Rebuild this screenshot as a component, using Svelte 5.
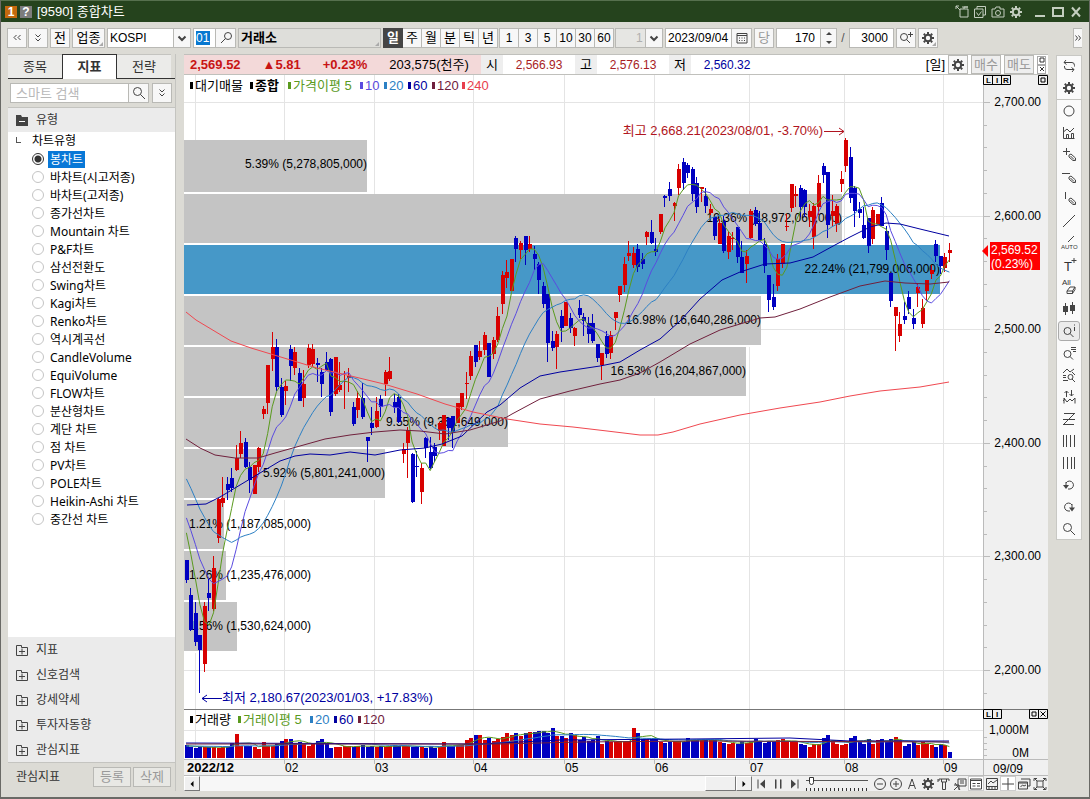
<script lang="ts">
  type Candle = { x: number; up: boolean; high: number; top: number; bottom: number; low: number };
  type Icon = { d?: string; fill?: string; text?: string; tx?: number; ty?: number; size?: number };

  const gear =
    'M8 2v2M8 12v2M2 8h2M12 8h2M3.8 3.8l1.4 1.4M10.8 10.8l1.4 1.4M3.8 12.2l1.4-1.4M10.8 5.2l1.4-1.4';

  const icons: Record<string, Icon> = {
    search: { d: 'M10.5 6.5a4 4 0 1 1-8 0a4 4 0 0 1 8 0M9.5 9.5L14 14' },
    searchLeft: { d: 'M13.5 6a3.5 3.5 0 1 1-7 0a3.5 3.5 0 0 1 7 0M7.5 8.5L3 13' },
    down: { d: 'M4.5 6.5L8 10l3.5-3.5' },
    doubleDown: { d: 'M5.5 4.5L8 7l2.5-2.5M5.5 8.5L8 11l2.5-2.5' },
    doubleLeft: { d: 'M7.5 5L5 7.5L7.5 10M11.5 5L9 7.5l2.5 2.5' },
    doubleRight: { d: 'M5.5 5.5L7.5 8L5.5 10.5M8.5 5.5L10.5 8L8.5 10.5' },
    calendar: { d: 'M3 3.5h10v9.5H3zM3 5.5h10M5 8h1M7.5 8h1M10 8h1M5 10.5h1M7.5 10.5h1M10 10.5h1' },
    zoomPlus: { d: 'M9.5 7a3.5 3.5 0 1 1-7 0a3.5 3.5 0 0 1 7 0M8.5 9.5L12 13M12.5 2v5M10 4.5h5' },
    refresh: { d: 'M5 2L3 4.5L5.5 6.5M3 4.5h8q2.5 0 2.5 3v1M11 14l2-2.5L10.5 9.5M13 11.5H6Q3.5 11.5 3.5 9V8' },
    circle: { d: 'M13 8a5 5 0 1 1-10 0a5 5 0 0 1 10 0' },
    chart: { d: 'M2.5 2v11.5h11M5.5 13V9.5h2V13M10.5 13V8.5h2V13M3 6.5l3-2.5l3 3l4-4' },
    plusPen: { d: 'M2 4.5h7M5.5 1v7M8 8l2-1l4.5 4v2.5H12L8 10zM9.5 9l3.5 3.5' },
    minusPen: { d: 'M1 4.5h8M8 8l2-1l4.5 4v2.5H12L8 10zM9.5 9l3.5 3.5' },
    linePen: { d: 'M4.5 1v7M8 8l2-1l4.5 4v2.5H12L8 10zM9.5 9l3.5 3.5' },
    line: { d: 'M2 14L14 2' },
    auto: { d: 'M7 7l6-6', text: 'AUTO', tx: 0, ty: 14, size: 6 },
    text: { d: 'M10.5 3.5h5M13 1v5', text: 'T', tx: 3, ty: 14, size: 13 },
    all: { d: 'M6 12l3-4h5l-2.5 4zM6 12v2.5h5.5v-2.5M14 8v2.500l-2.500 4', text: 'All', tx: 1, ty: 6, size: 8 },
    candles: { d: 'M4.5 2v12M11.5 1v12', fill: 'M2 5h5v6H2zM9 4h5v6H9z' },
    zoomInfo: { d: 'M10 8a3.5 3.5 0 1 1-7 0a3.5 3.5 0 0 1 7 0M9 10.5L12.5 14M13.5 4v4M13.5 1.5v1' },
    zoomList: { d: 'M10 9a3.5 3.5 0 1 1-7 0a3.5 3.5 0 0 1 7 0M9 11.5l3 3M10 2.5h5M10 4.5h5M12 6.5h3' },
    zoomWave: { d: 'M2 6l4-4l3 3l4-3M2 8.5h3M2 10.5h3M2 13.5h5M12 10a2.5 2.5 0 1 1-5 0a2.5 2.5 0 0 1 5 0M11 12l3 3M11 5l3 3' },
    arrows: { d: 'M5.5 8V2L3.5 4M5.5 2l2 2M10.5 1v6L8.5 5M10.5 7l2-2M3 14.500V9l3 4l3-3l2 2l3-3v5.500M2 12l2-2' },
    zigzag: { d: 'M3 2.5h11M2 13.5h11M2 8.5h12M13 3L3 13' },
    bars3: { d: 'M2.5 2v12M5.5 2v12M9.5 2v12M13.5 2v12' },
    bars4: { d: 'M2.5 2v12M6.5 2v12M10.5 2v12M13.5 2v12' },
    undo: { d: 'M5 6a4 4 0 1 1 4 6H7M5 5v5', fill: 'M2 8h6L5 12z' },
    redo: { d: 'M11 6a4 4 0 1 0-4 6h2M11 5v5', fill: 'M8 8.5h6L11 12.5z' },
    minus: { d: 'M13.5 8a5.5 5.5 0 1 1-11 0a5.5 5.5 0 0 1 11 0M5 8h6' },
    plus: { d: 'M13.5 8a5.5 5.5 0 1 1-11 0a5.5 5.5 0 0 1 11 0M5 8h6M8 5v6' },
    letter: { d: 'M4.5 13L8 3l3.5 10M6 9.5h4' },
    brush: { d: 'M3 5V3h10v2M5.5 3v3h5V3M6.500 6v7.500h3V6M2 3v3' },
    link: { d: 'M6 3h8v7H6zM8 5h4M8 7h4M2 9h5v5M2 14l5-5M3 7l5 7' },
    table: { d: 'M2.5 3h11v10h-11zM3 4.5h10M4.5 7.5h3M9 7.5h3M4.5 10h3M9 10h3' },
    graph: { d: 'M2.5 2.5h11v11h-11zM3 10.5h10M5 13v-2M8 13v-2M11 13v-2M4 8l3-3l2 2l4-3' },
    cross: { d: 'M8 2v12M2 8h12' },
    windows: { d: 'M5 3h9v7h-2M2.5 6h9v7h-9zM3 7h8M4.5 11l2-2l1.500 1l2-1' },
    fit: { d: 'M5 5h6v6H5zM2 5V2.5h3M11 2.5h3V5M14 11v2.5h-3M5 13.5H2V11M2 2l3 3M14 2l-3 3M14 14l-3-3M2 14l3-3' },
    skipBack: { d: 'M4 3.5v9', fill: 'M11 3.5v9L6 8z' },
    pause: { d: 'M5.5 3.5v9M6 3.5v9M10.5 3.5v9M11 3.5v9' },
    skipNext: { d: 'M12 3.5v9', fill: 'M5 3.5v9L10 8z' },
    popOut: { d: 'M6 5h8v8H6zM10 5V3h4M2 2l4 4M2 5V2h3M8 3h6' },
    checkWin: { d: 'M2.5 5h8.5v8.5H2.5zM5 5V2.5h8.5V11H11M4.5 8.5l2 3l3-4' },
    camera: { d: 'M2 5h3l1-2h4v2h4v8H2zM10.5 9a2.5 2.5 0 1 1-5 0a2.5 2.5 0 0 1 5 0' },
    folderMinus: { fill: 'M2 3h5l1 2h6v9H2z' },
    folderPlus: { d: 'M2.5 3.5h5v2h6v8h-11zM5 9.5h6M8 6.5v6' }
  };

  const treeItems = [
    '봉차트', '바차트(시고저종)', '바차트(고저종)', '종가선차트', 'Mountain 차트', 'P&F차트', '삼선전환도',
    'Swing차트', 'Kagi차트', 'Renko차트', '역시계곡선', 'CandleVolume', 'EquiVolume', 'FLOW차트',
    '분산형차트', '계단 차트', '점 차트', 'PV차트', 'POLE차트', 'Heikin-Ashi 차트', '중간선 차트'
  ];
  const folders = ['지표', '신호검색', '강세약세', '투자자동향', '관심지표'];
  const periods = ['일', '주', '월', '분', '틱', '년'];
  const minutes = ['1', '3', '5', '10', '30', '60'];
  const drawTools = [
    'circle', 'chart', 'plusPen', 'minusPen', 'linePen', 'line', 'auto', 'text', 'all', 'candles', 'zoomInfo',
    'zoomList', 'zoomWave', 'arrows', 'zigzag', 'bars3', 'bars4', 'undo', 'redo', 'search'
  ];
  const footTools = ['minus', 'plus', 'letter', 'gear', 'brush', 'link', 'table', 'graph', 'cross', 'windows', 'fit'];

  let chartType = $state('봉차트');
  let period = $state('일');
  let keyword = $state('');
  let drawTool = $state('zoomInfo');

  // r = up day, b = down day; then high, body top, body bottom, low
  const rawCandles = `
    b560,560,580,583 b588,595,630,631 b602,613,642,646 b635,635,650,693 r602,606,664,672 b578,593,598,611
    r556,568,609,611 r498,499,538,543 r477,498,503,507 b477,484,490,500 b468,478,488,492 r445,458,470,471
    r431,443,454,458 b438,442,467,468 b462,467,480,493 r465,465,494,494 r447,448,467,472 r406,409,414,419
    r365,365,403,414 r332,347,359,371 b339,347,387,391 b378,387,415,417 r381,386,391,405 b345,349,366,381
    r347,352,368,375 b368,373,401,401 r370,384,398,407 r344,348,365,368 r344,349,364,367 b358,363,365,382
    b368,372,384,397 b352,362,370,371 b358,359,412,416 r357,357,394,396 r362,385,390,392 r371,381,382,409
    r368,376,378,392 b402,407,424,426 r391,398,410,418 b383,398,417,419 b437,437,441,462 b407,423,428,435
    r397,411,427,428 b395,399,407,417 r370,372,384,396 r357,371,379,381 b394,402,407,413 b394,397,422,423
    r443,449,454,463 r427,430,443,478 b453,454,502,503 b451,466,467,477 r463,468,492,504 b437,438,448,458
    b437,452,468,469 b443,447,456,462 r422,423,431,440 r415,415,446,446 b417,418,428,440 b416,416,432,448
    r403,403,423,423 r393,393,407,410 r372,383,384,399 r351,356,376,380 b345,345,362,367 r341,351,357,360
    r332,335,350,355 b343,343,377,377 r337,340,354,359 r307,316,340,342 r271,275,304,314 r260,272,278,288
    r259,259,291,291 b236,238,249,262 r241,243,250,259 b236,236,250,265 r236,244,249,252 b246,254,259,270
    b262,264,280,294 b282,286,304,308 b294,294,343,362 b331,341,348,351 r331,334,347,369 b310,316,328,342
    r302,302,326,326 b313,318,328,333 r327,328,336,346 b300,308,315,318 b313,317,321,336 b317,323,334,343
    b314,323,341,343 b344,344,358,362 r353,353,365,380 b331,336,354,358 r331,335,353,359 r312,312,318,330
    r286,286,295,302 r257,264,285,292 r241,253,256,261 r247,253,265,268 b244,249,267,272 b253,259,264,269
    r231,232,237,245 b220,232,243,244 b238,249,252,256 r214,214,232,234 b195,196,198,207 b182,189,196,201
    r202,203,206,221 r164,169,188,195 b158,162,183,190 b163,165,173,178 b167,169,194,201 b177,183,207,213
    r187,187,189,202 b188,196,206,213 r204,209,213,215 b217,217,236,240 r219,223,244,244 b216,221,251,253
    r232,236,252,259 r232,238,239,250 b227,227,257,263 b241,257,273,273 r250,256,264,283 r209,211,238,239
    b207,210,224,226 b211,223,240,240 b238,244,266,273 b275,275,300,312 b284,297,307,310 r254,259,286,291
    r244,244,264,268 r214,226,227,231 r184,184,208,212 r186,194,196,207 b185,188,207,217 b189,190,207,217
    r204,211,217,227 r203,206,237,249 r175,183,207,215 b163,166,175,183 b172,172,225,238 r195,211,216,227
    r204,206,224,232 r171,179,184,192 r138,140,166,172 b147,157,198,203 b186,188,211,227 b202,209,213,218
    b207,225,238,239 b218,218,246,253 r207,210,239,244 r214,214,224,224 b197,203,226,226 b226,231,250,260
    b273,273,301,307 r307,307,316,351 r312,324,336,342 b302,316,320,324 b291,297,309,314 b309,318,324,329
    r284,287,293,307 r299,308,324,328 r280,280,291,301 r265,270,274,279 b240,244,256,262 b256,256,266,274
    r253,257,268,272 r243,250,253,262`;

  const xAt = (i: number) => 186.4 + i * 4.515;

  const candles: Candle[] = rawCandles
    .trim()
    .split(/\s+/)
    .map((item, i) => {
      const [high, top, bottom, low] = item.slice(1).split(',').map(Number);
      return { x: Math.floor(xAt(i)), up: item[0] === 'r', high, top, bottom, low };
    });

  const volumes = [
    13, 11, 10, 11, 11, 11, 11, 10, 11, 11, 15, 24, 12, 12, 12, 11, 9, 16, 12, 12, 14, 17, 19, 19, 15, 16, 14, 12, 15,
    17, 19, 15, 10, 11, 11, 12, 12, 11, 12, 13, 11, 12, 11, 12, 11, 12, 13, 12, 12, 12, 11, 12, 11, 10, 12, 10, 11, 16,
    12, 12, 13, 13, 18, 20, 23, 23, 18, 20, 17, 19, 21, 25, 23, 25, 22, 25, 26, 26, 27, 27, 25, 30, 22, 22, 20, 25, 23,
    18, 21, 17, 18, 22, 14, 17, 16, 16, 17, 16, 17, 30, 25, 19, 19, 19, 19, 16, 15, 16, 17, 17, 16, 20, 18, 18, 18, 18,
    18, 18, 16, 15, 14, 15, 14, 17, 15, 16, 19, 17, 15, 17, 16, 18, 19, 16, 16, 16, 14, 13, 11, 14, 14, 20, 23, 16, 14,
    13, 14, 20, 22, 16, 14, 19, 14, 18, 19, 16, 19, 21, 18, 12, 14, 16, 13, 16, 14, 13, 11, 14, 13, 6
  ];

  // closes before the visible range, so the averages start on the first bar
  const earlier = [...Array(10).fill(440), ...Array(5).fill(503), ...Array(4).fill(521)];
  const closes = [...earlier, ...candles.map((c) => (c.up ? c.top : c.bottom))];
  const volumeTops = [...Array(19).fill(746), ...volumes.map((v) => 758 - v)];

  function average(values: number[], days: number) {
    return candles
      .map((_, i) => {
        const end = i + 20;
        const sum = values.slice(end - days, end).reduce((a, b) => a + b, 0);
        return `${xAt(i).toFixed(1)},${(sum / days).toFixed(1)}`;
      })
      .join(' ');
  }

  const ma60 =
    '187,505 206,504 220,497 240,485 260,473 280,461 295,456 310,454 330,455 350,452 375,455 400,450 425,448 442,444 462,436 487,412 500,405 520,388 540,376 560,372 600,366 620,362 640,350 660,339 680,321 700,299 722,280 740,272 765,264 790,263 813,257 835,245 850,237 870,227 886,223 900,224 920,229 949,236';
  const ma120 =
    '186,439 200,448 215,455 235,458 258,458 275,453 300,446 325,439 350,435 375,432 400,430 420,431 445,434 470,430 500,421 512,414 540,399 570,391 600,384 620,380 640,373 660,362 690,344 720,330 740,324 760,318 775,317 800,309 830,297 860,286 885,281 905,283 930,284 949,282';
  const ma240 =
    '186,312 196,320 211,329 231,341 251,348 284,358 317,368 351,376 384,384 417,394 445,404 473,412 507,419 540,424 573,427 607,431 640,435 658,435 673,432 700,424 740,415 780,408 820,402 850,396 880,391 920,387 949,382';

  const profile = [
    { y: 140, h: 52, end: 367, label: '5.39% (5,278,805,000)' },
    { y: 194, h: 49, end: 842, label: '19.36% (18,972,060,000)' },
    { y: 245, h: 49, end: 940, label: '22.24% (21,799,006,000)', current: true },
    { y: 296, h: 49, end: 761, label: '16.98% (16,640,286,000)' },
    { y: 347, h: 49, end: 746, label: '16.53% (16,204,867,000)' },
    { y: 398, h: 49, end: 508, label: '9.55% (9,361,649,000)' },
    { y: 449, h: 49, end: 385, label: '5.92% (5,801,241,000)' },
    { y: 500, h: 49, end: 224, label: '1.21% (1,187,085,000)' },
    { y: 551, h: 49, end: 226, label: '1.26% (1,235,476,000)' },
    { y: 602, h: 49, end: 237, label: '1.56% (1,530,624,000)' }
  ];

  const months = [
    { x: 195, label: '' },
    { x: 284, label: '02' },
    { x: 374, label: '03' },
    { x: 473, label: '04' },
    { x: 564, label: '05' },
    { x: 654, label: '06' },
    { x: 749, label: '07' },
    { x: 844, label: '08' },
    { x: 943, label: '09' }
  ];
  const prices = ['2,700.00', '2,600.00', '2,500.00', '2,400.00', '2,300.00', '2,200.00'].map((label, i) => ({
    label,
    y: Math.round(102 + i * 113.6)
  }));
  const ticks = Array.from({ length: 27 }, (_, i) => Math.round(102 + i * 22.72)).filter((y) => y < 705);

  const priceLegend = [
    { x: 190, label: '대기매물', color: '#000' },
    { x: 250, label: '종합', color: '#000', bold: true },
    { x: 288, label: '가격이평 5', color: '#5a9a1e' },
    { x: 360, label: '10', color: '#5a4be0' },
    { x: 384, label: '20', color: '#2c80c4' },
    { x: 408, label: '60', color: '#0000a0' },
    { x: 432, label: '120', color: '#70203c' },
    { x: 462, label: '240', color: '#e8404c' }
  ];
  const volumeLegend = [
    { x: 190, label: '거래량', color: '#000' },
    { x: 238, label: '거래이평 5', color: '#5a9a1e' },
    { x: 310, label: '20', color: '#2c80c4' },
    { x: 334, label: '60', color: '#0000a0' },
    { x: 358, label: '120', color: '#70203c' }
  ];
</script>

{#snippet icon(name: string)}
  <svg class="icon" viewBox="0 0 16 16" aria-hidden="true">
    {#if name === 'gear'}
      <circle cx="8" cy="8" r="3.2" class="gear" />
      <path d={gear} class="gear" />
    {:else}
      {#if icons[name].d}<path d={icons[name].d} />{/if}
      {#if icons[name].fill}<path d={icons[name].fill} class="solid" />{/if}
      {#if name === 'folderMinus'}<path d="M5 9.5h6" class="knock" />{/if}
      {#if icons[name].text}
        <text x={icons[name].tx} y={icons[name].ty} font-size={icons[name].size}>{icons[name].text}</text>
      {/if}
    {/if}
  </svg>
{/snippet}

{#snippet legend(items, y)}
  <g class="legend">
    {#each items as item}
      <g fill={item.color}>
        <rect x={item.x} y={y - 8} width="3" height="7" />
        <text x={item.x + 5} {y} class:strong={item.bold}>{item.label}</text>
      </g>
    {/each}
  </g>
{/snippet}

<div class="window">
  <header class="titlebar">
    <span class="badge orange">1</span>
    <span class="badge">?</span>
    <h1>[9590] 종합차트</h1>
    <div class="title-tools">
      <button aria-label="분리">{@render icon('popOut')}</button>
      <button aria-label="복사">{@render icon('checkWin')}</button>
      <button aria-label="화면 저장">{@render icon('camera')}</button>
      <button aria-label="설정">{@render icon('gear')}</button>
    </div>
    <div class="window-tools">
      <button aria-label="최소화"><svg viewBox="0 0 16 16"><path d="M3 12h10" /></svg></button>
      <button aria-label="최대화"><svg viewBox="0 0 16 16"><path d="M3 4h10v8H3z" /></svg></button>
      <button aria-label="닫기"><svg viewBox="0 0 16 16"><path d="M4 3.5l8 9M12 3.5l-8 9" /></svg></button>
    </div>
  </header>

  <div class="toolbar">
    <div class="group spaced">
      <button class="btn" aria-label="이전">{@render icon('doubleLeft')}</button>
      <button class="btn" aria-label="펼치기">{@render icon('doubleDown')}</button>
    </div>
    <button class="btn hangul">전</button>
    <button class="btn hangul wide corner">업종</button>
    <div class="select market">
      <select aria-label="시장"><option>KOSPI</option></select>
      {@render icon('down')}
    </div>
    <div class="group">
      <div class="code"><input aria-label="종목코드" value="01" /></div>
      <button class="btn joined" aria-label="종목 검색">{@render icon('searchLeft')}</button>
    </div>
    <button class="btn name corner">거래소</button>
    <div class="group segments">
      {#each periods as p}
        <button class="btn hangul" class:active={period === p} onclick={() => (period = p)}>{p}</button>
      {/each}
    </div>
    <div class="group segments">
      {#each minutes as m}
        <button class="btn" class:active={period === m} onclick={() => (period = m)}>{m}</button>
      {/each}
    </div>
    <div class="select unit">
      <select aria-label="단위" disabled><option>1</option></select>
      {@render icon('down')}
    </div>
    <div class="group">
      <input class="date" aria-label="날짜" value="2023/09/04" />
      <button class="btn joined" aria-label="달력">{@render icon('calendar')}</button>
    </div>
    <button class="btn hangul" disabled>당</button>
    <div class="group">
      <input class="count" aria-label="표시 개수" value="170" />
      <div class="spin">
        <button aria-label="증가"><svg viewBox="0 0 8 5"><path d="M1 4h6L4 1z" /></svg></button>
        <button aria-label="감소"><svg viewBox="0 0 8 5"><path d="M1 1h6L4 4z" /></svg></button>
      </div>
    </div>
    <span class="slash">/</span>
    <input class="total" aria-label="전체 개수" value="3000" />
    <button class="btn" aria-label="확대">{@render icon('zoomPlus')}</button>
    <button class="btn corner" aria-label="설정">{@render icon('gear')}</button>
    <button class="btn more" aria-label="더보기">{@render icon('doubleRight')}</button>
  </div>

  <main>
    <aside class="side">
      <div class="tabs" role="tablist">
        <button role="tab" aria-selected="false">종목</button>
        <button role="tab" aria-selected="true" class="selected">지표</button>
        <button role="tab" aria-selected="false">전략</button>
      </div>
      <div class="search">
        <input placeholder="스마트 검색" aria-label="스마트 검색" bind:value={keyword} />
        <button class="btn joined" aria-label="검색">{@render icon('search')}</button>
        <button class="btn" aria-label="펼치기">{@render icon('doubleDown')}</button>
      </div>
      <button class="folder open">{@render icon('folderMinus')}유형</button>
      <fieldset class="tree">
        <legend>차트유형</legend>
        {#each treeItems as item}
          <label>
            <input type="radio" name="chart-type" value={item} bind:group={chartType} />
            <span>{item}</span>
          </label>
        {/each}
      </fieldset>
      {#each folders as folder}
        <button class="folder">{@render icon('folderPlus')}{folder}</button>
      {/each}
      <footer>
        <span>관심지표</span>
        <button class="btn hangul" disabled>등록</button>
        <button class="btn hangul" disabled>삭제</button>
      </footer>
    </aside>

    <section class="chart">
      <div class="quote">
        <div class="now">
          <b>2,569.52</b>
          <b>▲5.81</b>
          <b>+0.23%</b>
          <span>203,575(천주)</span>
        </div>
        <span class="key">시</span><span class="value">2,566.93</span>
        <span class="key">고</span><span class="value">2,576.13</span>
        <span class="key">저</span><span class="value low">2,560.32</span>
        <div class="quote-tools">
          <span>[일]</span>
          <button class="btn" aria-label="설정">{@render icon('gear')}</button>
          <button class="btn hangul trade" disabled>매수</button>
          <button class="btn hangul trade" disabled>매도</button>
          <div class="mini">
            <button aria-label="최대화"><svg viewBox="0 0 8 8"><path d="M2 2h4v4H2z" /></svg></button>
            <button aria-label="닫기"><svg viewBox="0 0 8 8"><path d="M2 2l4 4M6 2l-4 4" /></svg></button>
          </div>
        </div>
      </div>

      <svg class="plot" viewBox="184 75 864 701" role="img" aria-label="종합차트">
        <rect x="184" y="75" width="864" height="701" fill="#fff" />
        <rect x="983" y="75" width="65" height="701" fill="#f0f0f0" />
        <rect x="184" y="760" width="864" height="16" fill="#f0f0f0" />

        <g class="grid">
          {#each months as month}
            <path d="M{month.x}.5 75V760" />
          {/each}
          {#each prices as price}
            <path d="M184 {price.y}.5H983" />
          {/each}
          <path d="M184 730.5H983" />
        </g>

        {#each profile as row}
          <rect x="184" y={row.y} width={row.end - 184} height={row.h + 2} fill="#fff" />
        {/each}
        {#each profile as row}
          <rect x="184" y={row.y} width={row.end - 184} height={row.h} fill={row.current ? '#4698c8' : '#c4c4c4'} />
          {#if row.end < 300}
            <text x="189" y={row.y + 28}>{row.label}</text>
          {:else}
            <text x={row.end} y={row.y + 28} text-anchor="end">{row.label}</text>
          {/if}
        {/each}

        <g shape-rendering="crispEdges">
          {#each candles as c}
            <g fill={c.up ? '#d80000' : '#0000c0'}>
              <rect x={c.x} y={c.high} width="1" height={c.low - c.high} />
              <rect x={c.x - 1} y={c.top} width="4" height={Math.max(c.bottom - c.top, 1)} />
            </g>
          {/each}
          {#each candles as c, i}
            <rect
              x={c.x - 1}
              y={758 - volumes[i]}
              width="4"
              height={volumes[i]}
              fill={c.up && volumes[i] > 8 ? '#d80000' : '#0000c0'}
            />
          {/each}
        </g>

        <g class="averages">
          <polyline points={average(closes, 5)} stroke="#5a9a1e" />
          <polyline points={average(closes, 10)} stroke="#5a4be0" />
          <polyline points={average(closes, 20)} stroke="#2c80c4" />
          <polyline points={ma60} stroke="#0000a0" />
          <polyline points={ma120} stroke="#70203c" />
          <polyline points={ma240} stroke="#f04850" />
          <polyline points={average(volumeTops, 5)} stroke="#5a9a1e" />
          <polyline points={average(volumeTops, 20)} stroke="#2c80c4" />
          <polyline points="186,743 480,744 560,740 690,739 790,738 850,741 949,741" stroke="#0000a0" />
          <polyline points="186,744 500,744 580,742 700,741 949,742" stroke="#70203c" />
        </g>

        <g class="mark high">
          <text x="823" y="135" text-anchor="end">최고 2,668.21(2023/08/01, -3.70%)</text>
          <path d="M824 131.5h20M839 128l5 3.5l-5 3.5" />
        </g>
        <g class="mark low">
          <text x="222" y="702">최저 2,180.67(2023/01/03, +17.83%)</text>
          <path d="M222 698.5h-20M207 695l-5 3.5l5 3.5" />
        </g>

        <path d="M184 709.5H1048" stroke="#777" />
        <path d="M983.5 75V776M184 759.5H1048M184 775.5H1048" stroke="#bbb" />
        {#each ticks as y, i}
          <path d="M984 {y}.5h{i % 5 ? 3 : 6}" stroke="#bbb" />
        {/each}
        {#each [737, 743, 749, 755] as y}
          <path d="M984 {y}.5h3" stroke="#bbb" />
        {/each}
        {#each prices as price}
          <text x="1041" y={price.y + 4} text-anchor="end">{price.label}</text>
        {/each}
        <text x="1029" y="734" text-anchor="end">1,000M</text>
        <text x="1029" y="757" text-anchor="end">0M</text>
        <text x="993" y="773">09/09</text>
        <text x="187" y="772" class="strong large">2022/12</text>
        {#each months.slice(1) as month}
          <path d="M{month.x}.5 760v4" stroke="#bbb" />
          <text x={month.x + 1} y="772">{month.label}</text>
        {/each}

        <path d="M982 251l6-6v12z" fill="#f00" />
        <rect x="990" y="242" width="50" height="28" fill="#f00" />
        <text x="991" y="254" class="inverse">2,569.52</text>
        <text x="991" y="268" class="inverse">(0.23%)</text>

        <g class="frame-buttons">
          <path d="M983.5 75.5h27v9h-27zM992.5 75v10M1001.5 75v10M1038.5 75.5h9v9h-9zM1041 78h4v4h-4z" />
          <path d="M983.5 709.5h18v9h-18zM992.5 709v10M1029.5 709.5h18v9h-18zM1038.5 709v10M1032 712h4v4h-4zM1040.5 711.5l5 5M1045.5 711.5l-5 5" />
          <text x="986" y="83">L</text><text x="996" y="83">I</text><text x="1003" y="83">R</text>
          <text x="986" y="717">L</text><text x="996" y="717">I</text>
        </g>

        {@render legend(priceLegend, 90)}
        {@render legend(volumeLegend, 724)}
      </svg>

      <div class="bottom">
        <div class="scroll">
          <button aria-label="왼쪽"><svg viewBox="0 0 8 8"><path d="M5.5 1v6L2.5 4z" /></svg></button>
          <div class="track"><div class="thumb"></div></div>
          <button aria-label="오른쪽"><svg viewBox="0 0 8 8"><path d="M2.5 1v6L5.5 4z" /></svg></button>
        </div>
        <div class="play">
          <button aria-label="처음">{@render icon('skipBack')}</button>
          <button aria-label="일시정지">{@render icon('pause')}</button>
          <button aria-label="다음">{@render icon('skipNext')}</button>
        </div>
        <input class="speed" type="range" min="0" max="20" value="1" aria-label="속도" />
        <div class="foot-tools">
          {#each footTools as tool}
            <button aria-label={tool} class:boxed={tool === 'table' || tool === 'cross'}>{@render icon(tool)}</button>
          {/each}
        </div>
      </div>
    </section>

    <nav class="draw" aria-label="그리기 도구">
      <button aria-label="refresh">{@render icon('refresh')}</button>
      <button aria-label="gear">{@render icon('gear')}</button>
      <hr />
      {#each drawTools as tool}
        <button aria-label={tool} class:active={drawTool === tool} onclick={() => (drawTool = tool)}>
          {@render icon(tool)}
        </button>
      {/each}
    </nav>
  </main>
</div>

<style>
  :global(body) {
    background: #dcdbd5;
  }

  .window {
    font-family: 'Liberation Sans', 'Noto Sans CJK KR', sans-serif;
    font-size: 12px;
    line-height: 16px;
    color: #000;
    min-height: 100vh;
    box-sizing: border-box;
    display: flex;
    flex-direction: column;
    background: #dcdbd5;
    border: 1px solid #6a6a66;
    border-top-color: #56704e;
    border-bottom-width: 2px;
  }

  button,
  input,
  select {
    font: inherit;
    color: inherit;
    margin: 0;
    padding: 0;
    border: 0;
    border-radius: 0;
    background: none;
    box-sizing: border-box;
    min-width: 0;
  }

  button {
    display: flex;
    align-items: center;
    justify-content: center;
    white-space: nowrap;
  }

  svg {
    display: block;
  }

  .icon {
    width: 16px;
    height: 16px;
    flex: none;
    overflow: visible;
    fill: none;
    stroke: #444;
  }

  .icon .solid {
    fill: #444;
    stroke: none;
  }

  .icon .gear {
    stroke-width: 2;
  }

  .icon .knock {
    stroke: #fff;
  }

  .icon text {
    fill: #333;
    stroke: none;
  }

  .titlebar {
    height: 21px;
    flex: none;
    display: flex;
    align-items: center;
    gap: 2px;
    padding: 0 5px 0 4px;
    background: #25431d;
    color: #fff;
  }

  .badge {
    width: 12px;
    height: 12px;
    line-height: 12px;
    text-align: center;
    font-weight: bold;
    background: #7c7c7c;
  }

  .badge.orange {
    background: #c4690e;
    margin-right: 1px;
  }

  h1 {
    font-size: 13px;
    font-weight: normal;
    margin: 0 auto 0 3px;
  }

  .title-tools,
  .window-tools {
    display: flex;
    gap: 2px;
  }

  .title-tools .icon {
    stroke: #c4cec0;
  }

  .window-tools {
    margin-left: 6px;
  }

  .window-tools svg {
    width: 16px;
    height: 16px;
    fill: none;
    stroke: #c4cec0;
    stroke-width: 2;
  }

  .toolbar {
    height: 32px;
    flex: none;
    display: flex;
    align-items: center;
    gap: 2px;
    padding: 0 7px 0 6px;
  }

  .group {
    display: flex;
  }

  .group.spaced {
    gap: 1px;
  }

  .btn {
    width: 20px;
    height: 20px;
    flex: none;
    border: 1px solid #b9b9b5;
    background: #f7f7f7;
    position: relative;
  }

  .btn.hangul {
    font-size: 13px;
  }

  .btn.wide {
    width: 33px;
  }

  .btn.joined {
    border-left: 0;
  }

  .btn:disabled {
    color: #999;
  }

  .btn.active {
    background: #454545;
    border-color: #454545;
    color: #fff;
    font-weight: bold;
  }

  .btn.name {
    width: 143px;
    justify-content: flex-start;
    padding-left: 2px;
    background: #dededa;
    font-weight: bold;
    font-size: 13px;
  }

  .corner::after {
    content: '';
    position: absolute;
    right: 1px;
    bottom: 1px;
    border: 2px solid #aaa;
    border-top-color: transparent;
    border-left-color: transparent;
  }

  .segments .btn + .btn {
    border-left: 0;
    width: 19px;
  }

  .segments {
    margin-right: -1px;
  }

  .select {
    position: relative;
    height: 20px;
    border: 1px solid #b9b9b5;
    box-sizing: border-box;
    background: #fff;
  }

  .select select {
    appearance: none;
    width: 100%;
    height: 18px;
    padding-left: 2px;
  }

  .select .icon {
    position: absolute;
    right: 0;
    top: 0;
    height: 18px;
    stroke-width: 2;
    background: #f7f7f7;
    border-left: 1px solid #b9b9b5;
    pointer-events: none;
  }

  .market {
    width: 84px;
  }

  .unit {
    width: 48px;
    background: #e6e6e3;
  }

  .unit select {
    padding-left: 20px;
    color: #999;
  }

  .code,
  .date,
  .count,
  .total {
    height: 20px;
    border: 1px solid #b9b9b5;
    background: #fff;
  }

  .code {
    width: 23px;
    box-sizing: border-box;
    padding: 2px;
  }

  .code input {
    width: 14px;
    height: 14px;
    display: block;
    line-height: 14px;
    background: #0878d0;
    color: #fff;
  }

  .date {
    width: 67px;
    padding-left: 2px;
  }

  .count {
    width: 45px;
    padding-right: 5px;
    text-align: right;
  }

  .total {
    width: 45px;
    padding-right: 5px;
    text-align: right;
  }

  .spin {
    width: 16px;
    border: 1px solid #b9b9b5;
    border-left: 0;
    box-sizing: border-box;
    display: flex;
    flex-direction: column;
    background: #f7f7f7;
  }

  .spin button {
    flex: 1;
  }

  .spin svg {
    width: 8px;
    height: 5px;
    fill: #444;
  }

  .slash {
    width: 8px;
    text-align: center;
    color: #555;
  }

  .more {
    width: 9px;
    margin-left: auto;
    border-right: 0;
  }

  main {
    flex: 1;
    display: grid;
    grid-template-columns: 168px minmax(0, 1fr) 26px;
    gap: 8px;
    padding: 0 7px 6px;
  }

  .side {
    display: flex;
    flex-direction: column;
    border-right: 1px solid #c4c4c0;
    background: #dcdbd5;
  }

  .tabs {
    display: flex;
    height: 25px;
    border-bottom: 1px solid #333;
    box-sizing: border-box;
    font-size: 13px;
  }

  .tabs button {
    width: 54px;
    height: 24px;
    background: #ebebe9;
    border-top: 1px solid #c4c4c0;
    color: #333;
  }

  .tabs .selected {
    width: 55px;
    height: 25px;
    border: 1px solid #333;
    border-bottom: 0;
    background: #fff;
    font-weight: bold;
  }

  .search {
    display: flex;
    padding: 4px 3px 4px 2px;
    border-bottom: 1px solid #c4c4c0;
  }

  .search input {
    flex: 1;
    height: 20px;
    border: 1px solid #b9b9b5;
    background: #fff;
    padding-left: 5px;
    font-size: 13px;
  }

  .search input::placeholder {
    color: #b8b8b8;
    opacity: 1;
  }

  .search .btn + .btn {
    margin-left: 3px;
  }

  .folder {
    height: 25px;
    flex: none;
    justify-content: flex-start;
    gap: 6px;
    padding-left: 6px;
    background: #ebebeb;
    color: #333;
  }

  .folder.open {
    height: 24px;
  }

  .tree {
    flex: 1;
    margin: 0;
    padding: 0 0 0 24px;
    border: 0;
    min-width: 0;
    background: #fff;
    font-family: 'Noto Sans', 'Noto Sans CJK KR', sans-serif;
  }

  .tree legend {
    float: left;
    width: 100%;
    padding: 0;
    line-height: 18px;
    position: relative;
  }

  .tree legend::before {
    content: '';
    position: absolute;
    left: -16px;
    top: 5px;
    width: 4px;
    height: 5px;
    border: solid #555;
    border-width: 0 0 1px 1px;
  }

  .tree label {
    clear: both;
    display: flex;
    align-items: center;
    gap: 4px;
    height: 18px;
  }

  .tree label span {
    padding: 0 2px;
    line-height: 17px;
    white-space: nowrap;
  }

  .tree input {
    appearance: none;
    width: 12px;
    height: 12px;
    border: 1px solid #c4c4c4;
    border-radius: 50%;
  }

  .tree input:checked {
    border-color: #333;
    background: radial-gradient(circle, #333 3px, #fff 4px);
  }

  .tree input:checked + span {
    background: #0878d7;
    color: #fff;
  }

  footer {
    height: 29px;
    display: flex;
    align-items: center;
    gap: 2px;
    padding: 0 4px 0 8px;
    border-top: 1px solid #c4c4c0;
    box-sizing: border-box;
    color: #333;
  }

  footer span {
    margin-right: auto;
  }

  footer .btn {
    width: 38px;
    background: #e8e8e4;
  }

  .chart {
    min-width: 0;
  }

  .quote {
    height: 21px;
    display: flex;
    align-items: stretch;
    line-height: 20px;
    border: solid #c0c0bc;
    border-width: 1px 0;
    box-sizing: border-box;
    background: #fff;
  }

  .now {
    width: 291px;
    display: flex;
    gap: 22px;
    padding-left: 6px;
    background: #f3d9d9;
    white-space: nowrap;
    font-size: 13px;
  }

  .now b {
    color: #c81414;
  }

  .key {
    width: 22px;
    text-align: center;
    background: #eee;
    font-size: 13px;
  }

  .value {
    width: 72px;
    text-align: center;
    color: #a81c24;
  }

  .value.low {
    color: #0000a0;
  }

  .quote-tools {
    margin-left: auto;
    display: flex;
    align-items: center;
    gap: 3px;
    padding-right: 2px;
  }

  .quote-tools > span {
    font-size: 13px;
  }

  .quote-tools .btn {
    height: 19px;
  }

  .quote-tools .trade {
    width: 30px;
    background: #eee;
  }

  .mini button {
    width: 9px;
    height: 9px;
    border: 1px solid #aaa;
  }

  .mini svg {
    width: 8px;
    height: 8px;
    flex: none;
    fill: none;
    stroke: #333;
  }

  .plot {
    width: 100%;
    height: auto;
    fill: none;
    font-size: 12px;
  }

  .plot text {
    fill: #000;
    white-space: pre;
  }

  .plot .legend text {
    fill: inherit;
    font-size: 13px;
  }

  .plot .strong {
    font-weight: bold;
  }

  .plot .large {
    font-size: 13px;
  }

  .plot .inverse {
    fill: #fff;
  }

  .grid {
    stroke: #e4e4e4;
  }

  .averages {
    stroke-width: 1;
  }

  .mark {
    font-size: 13px;
  }

  .mark.high {
    stroke: #b01420;
  }

  .mark.low {
    stroke: #0000a0;
  }

  .mark text {
    stroke: none;
  }

  .mark.high text {
    fill: #b01420;
  }

  .mark.low text {
    fill: #0000a0;
  }

  .frame-buttons {
    stroke: #000;
    font-size: 8px;
  }

  .frame-buttons text {
    stroke: none;
    font-weight: bold;
  }

  .bottom {
    height: 15px;
    display: flex;
    align-items: center;
    background: #f0f0f0;
  }

  .scroll {
    flex: 1;
    height: 15px;
    display: flex;
    background: #f7f7f7;
  }

  .scroll button,
  .thumb {
    width: 16px;
    height: 15px;
    box-sizing: border-box;
    background: #f0f0f0;
    border: 1px solid #fff;
    border-right-color: #777;
    border-bottom-color: #777;
  }

  .scroll svg {
    width: 8px;
    height: 8px;
    fill: #000;
  }

  .track {
    flex: 1;
    display: flex;
    justify-content: flex-end;
  }

  .thumb {
    width: 31px;
  }

  .play {
    display: flex;
    margin-left: 2px;
  }

  .speed {
    appearance: none;
    width: 62px;
    height: 14px;
    margin: 0 4px;
    background:
      linear-gradient(#555, #555) 0 3px / 100% 1px no-repeat,
      repeating-linear-gradient(90deg, #333 0 1px, transparent 1px 4px) 0 11px / 100% 3px no-repeat;
  }

  .speed::-webkit-slider-thumb {
    appearance: none;
    width: 5px;
    height: 8px;
    margin-bottom: 5px;
    border: 1px solid #333;
    border-radius: 0 0 3px 3px;
    background: #fff;
  }

  .foot-tools {
    display: flex;
  }

  .foot-tools button,
  .play button {
    width: 16px;
    height: 15px;
  }

  .boxed {
    background: #fff;
    outline: 1px solid #ccc;
    outline-offset: -1px;
  }

  .draw {
    align-self: start;
    display: flex;
    flex-direction: column;
    align-items: center;
    margin-top: 1px;
    background: #fafafa;
    outline: 1px solid #c8c8c4;
    outline-offset: -1px;
  }

  .draw button {
    width: 22px;
    height: 22px;
    box-sizing: border-box;
  }

  .draw hr {
    width: 100%;
    margin: 0;
    border: 0;
    border-top: 1px solid #c4c4c0;
  }

  .draw .active {
    height: 20px;
    margin: 1px 0;
    background: #ececec;
    border: 1px solid #aaa;
    border-radius: 3px;
  }
</style>
